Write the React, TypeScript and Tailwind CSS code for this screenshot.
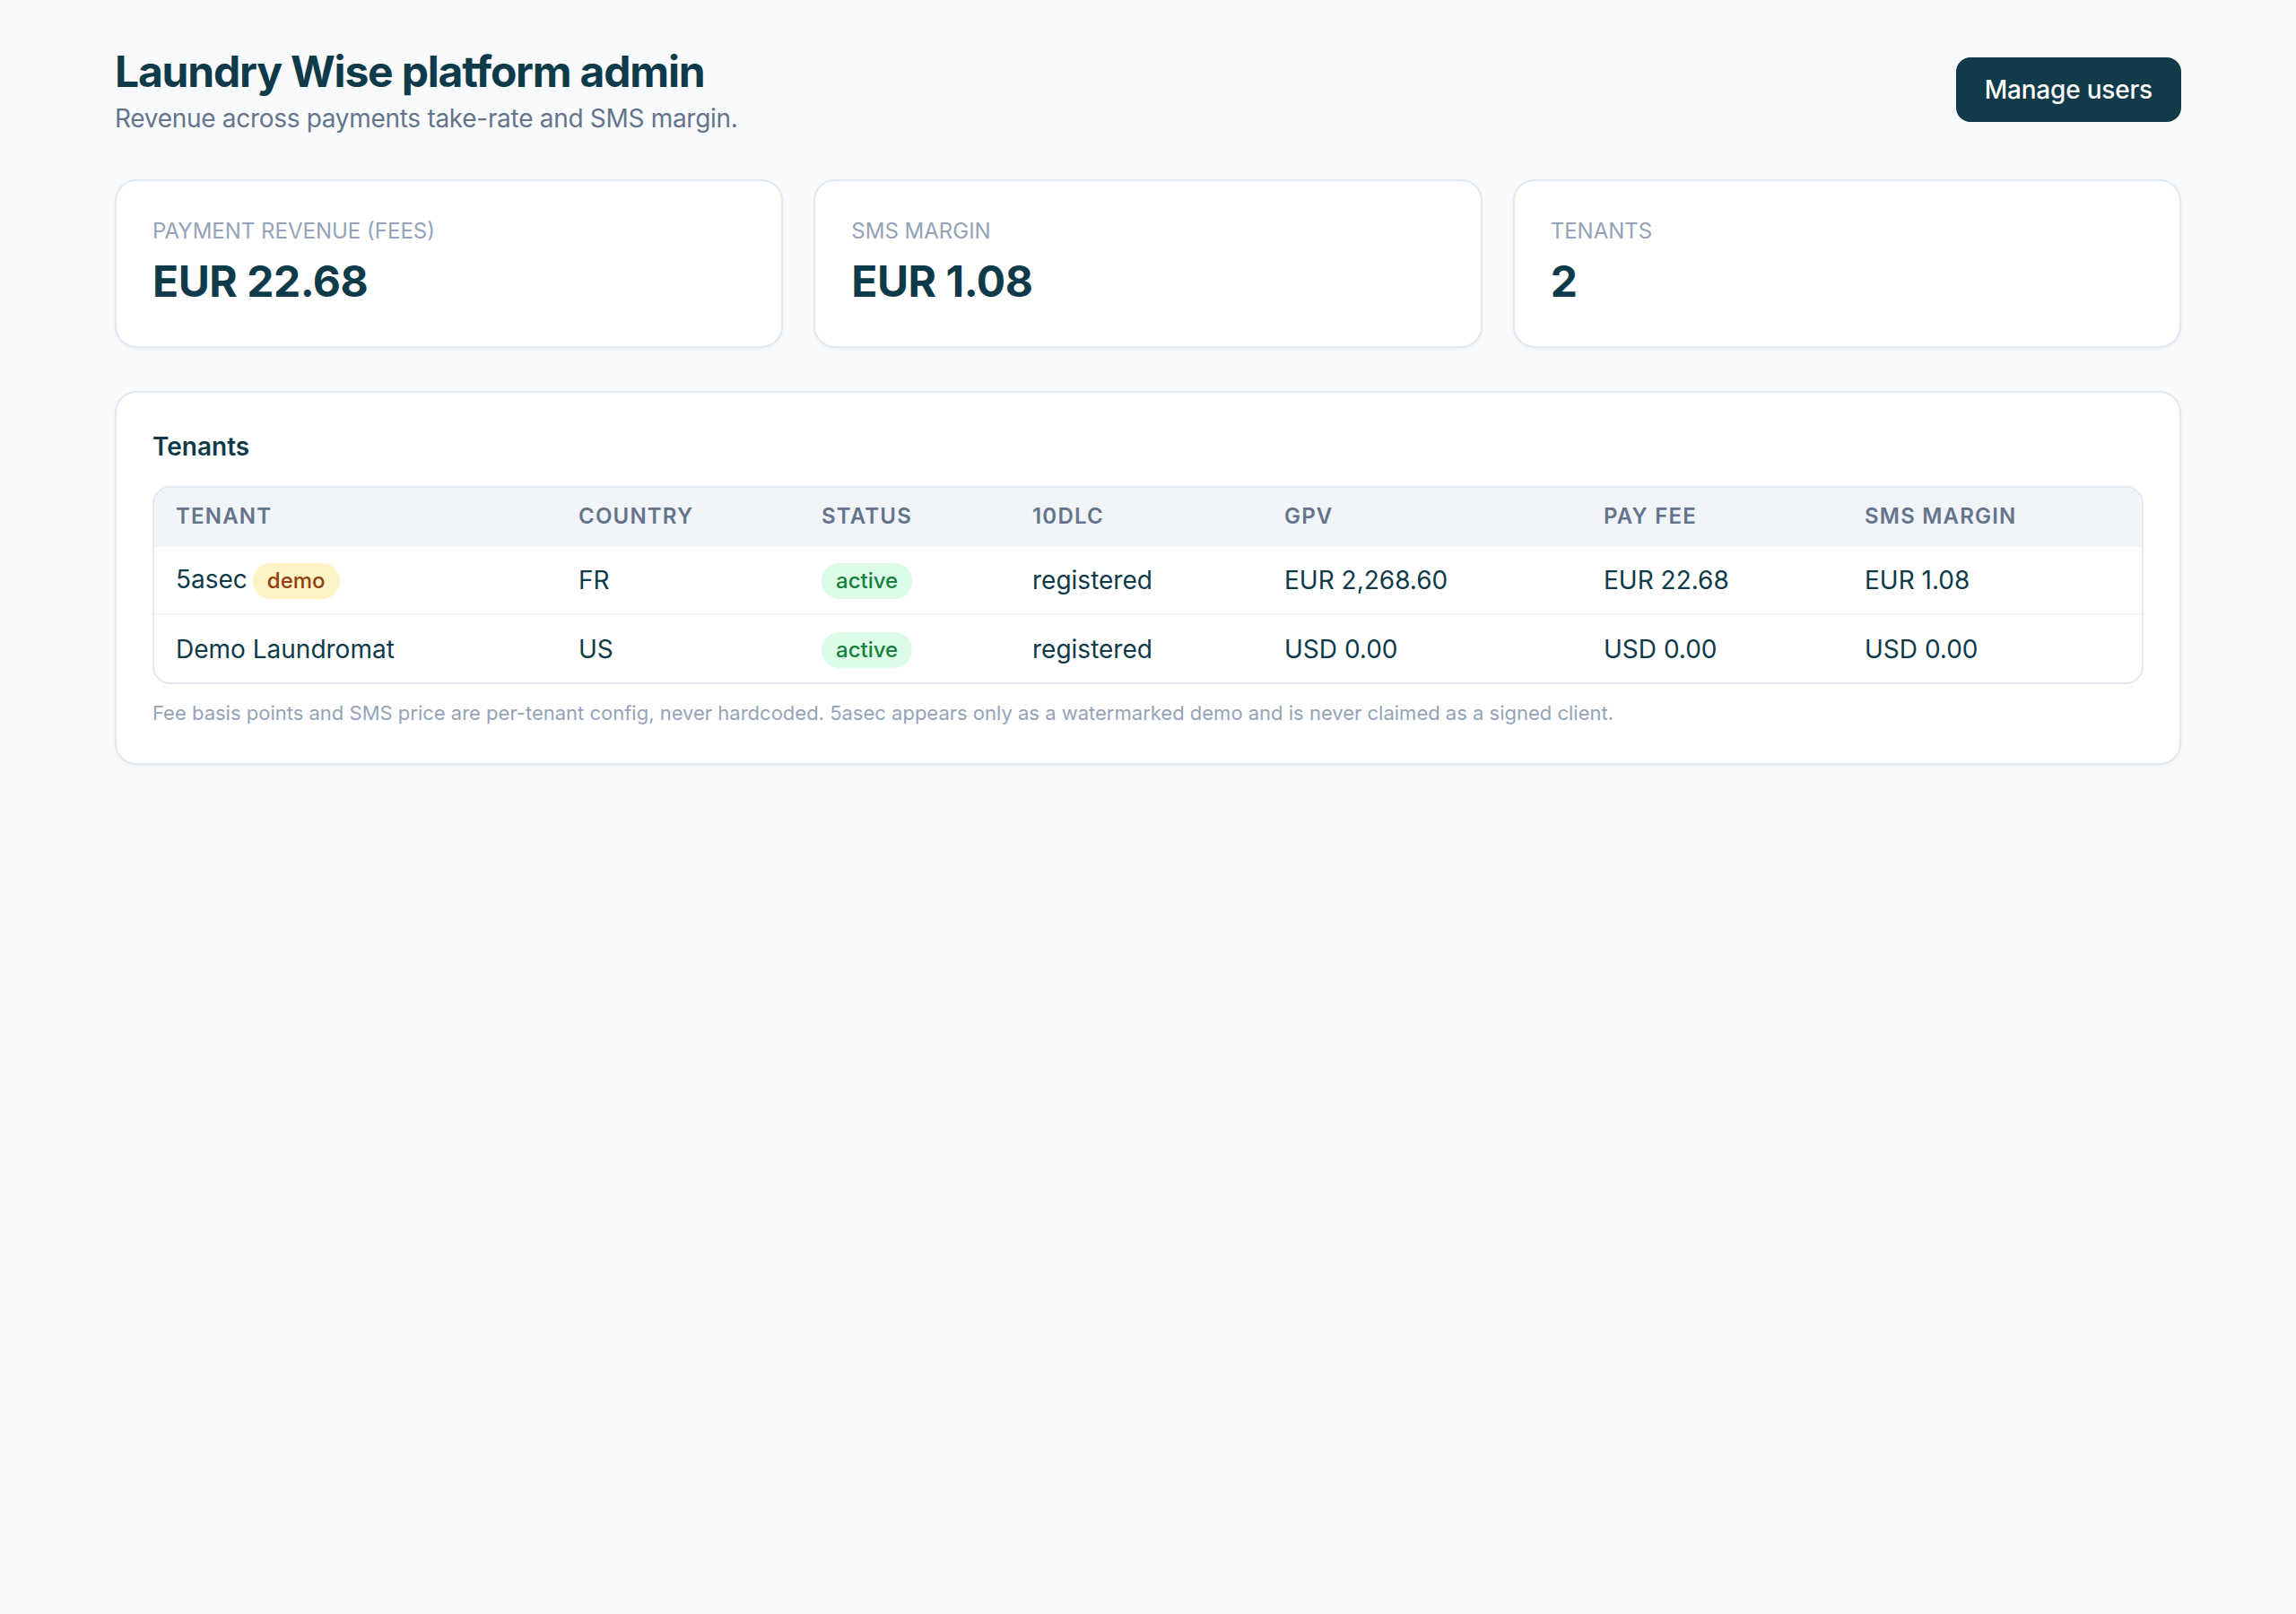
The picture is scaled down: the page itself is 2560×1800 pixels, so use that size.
import React from "react";

// Screenshot was taken at 2x, so every size below is the 1x Tailwind value doubled.

const stats = [
  { label: "Payment revenue (fees)", value: "EUR 22.68" },
  { label: "SMS margin", value: "EUR 1.08" },
  { label: "Tenants", value: "2" },
];

const columns = [
  { key: "tenant", title: "Tenant", width: "w-[449px]" },
  { key: "country", title: "Country", width: "w-[271px]" },
  { key: "status", title: "Status", width: "w-[235px]" },
  { key: "tendlc", title: "10DLC", width: "w-[281px]" },
  { key: "gpv", title: "GPV", width: "w-[356px]" },
  { key: "fee", title: "Pay fee", width: "w-[291px]" },
  { key: "sms", title: "SMS margin", width: "w-[333px]" },
];

const tenants = [
  { name: "5asec", demo: true, country: "FR", status: "active", tendlc: "registered", gpv: "EUR 2,268.60", fee: "EUR 22.68", sms: "EUR 1.08" },
  { name: "Demo Laundromat", demo: false, country: "US", status: "active", tendlc: "registered", gpv: "USD 0.00", fee: "USD 0.00", sms: "USD 0.00" },
];

function StatCard({ label, value }: { label: string; value: string }) {
  return (
    <div className="rounded-[24px] border-2 border-[#e2e8f0] bg-white p-[40px] shadow-[0_2px_4px_rgba(15,23,42,0.04)]">
      <div className="text-[24px] leading-[32px] uppercase text-[#94a3b8]">{label}</div>
      <div className="mt-[8px] text-[48px] leading-[64px] font-bold tracking-[-0.5px] text-[#0f3a4a]">{value}</div>
    </div>
  );
}

function Badge({ tone, children }: { tone: "amber" | "green"; children: React.ReactNode }) {
  const cls =
    tone === "amber"
      ? "bg-[#fef3c7] text-[#92400e]"
      : "bg-[#dcfce7] text-[#15803d]";
  return (
    <span className={`inline-block rounded-full px-[16px] py-[4px] text-[24px] leading-[32px] font-medium align-middle ${cls}`}>
      {children}
    </span>
  );
}

export default function App() {
  return (
    <div className="min-h-screen bg-[#f8fafc] font-['Inter','Noto_Sans',sans-serif] text-[#0f3a4a]">
      <div className="mx-auto max-w-[2304px] py-[48px]">
        <header className="flex items-center justify-between">
          <div>
            <h1 className="text-[48px] leading-[64px] font-bold tracking-[-1.2px] text-[#0f3a4a]">Laundry Wise platform admin</h1>
            <p className="text-[28px] leading-[40px] tracking-[-0.3px] text-[#64748b]">Revenue across payments take-rate and SMS margin.</p>
          </div>
          <button className="rounded-[16px] bg-[#113a4a] px-[32px] py-[16px] text-[28px] leading-[40px] font-medium tracking-[-0.2px] text-white hover:opacity-90">
            Manage users
          </button>
        </header>

        <div className="mt-[48px] grid grid-cols-3 gap-[34px]">
          {stats.map((s) => (
            <StatCard key={s.label} label={s.label} value={s.value} />
          ))}
        </div>

        <section className="mt-[48px] rounded-[24px] border-2 border-[#e2e8f0] bg-white p-[40px] shadow-[0_2px_4px_rgba(15,23,42,0.04)]">
          <h2 className="mb-[24px] text-[28px] leading-[40px] font-semibold">Tenants</h2>

          <div className="overflow-hidden rounded-[20px] border-2 border-[#e2e8f0]">
            <table className="w-full table-fixed border-collapse text-left">
              <thead className="bg-[#f1f5f9]">
                <tr>
                  {columns.map((c) => (
                    <th
                      key={c.key}
                      className={`${c.width} px-[24px] py-[16px] text-[24px] leading-[32px] font-semibold uppercase tracking-wider text-[#64748b]`}
                    >
                      {c.title}
                    </th>
                  ))}
                </tr>
              </thead>
              <tbody className="text-[28px] leading-[40px]">
                {tenants.map((t) => (
                  <tr key={t.name} className="border-t-2 border-[#f1f5f9]">
                    <td className="px-[24px] py-[16px]">
                      {t.name}
                      {t.demo && (
                        <span className="ml-[6px]">
                          <Badge tone="amber">demo</Badge>
                        </span>
                      )}
                    </td>
                    <td className="px-[24px] py-[16px]">{t.country}</td>
                    <td className="px-[24px] py-[16px]">
                      <Badge tone="green">{t.status}</Badge>
                    </td>
                    <td className="px-[24px] py-[16px]">{t.tendlc}</td>
                    <td className="px-[24px] py-[16px]">{t.gpv}</td>
                    <td className="px-[24px] py-[16px]">{t.fee}</td>
                    <td className="px-[24px] py-[16px]">{t.sms}</td>
                  </tr>
                ))}
              </tbody>
            </table>
          </div>

          <p className="mt-[16px] text-[22px] leading-[32px] text-[#94a3b8]">
            Fee basis points and SMS price are per-tenant config, never hardcoded. 5asec appears only as a watermarked demo and is never claimed as a signed client.
          </p>
        </section>
      </div>
    </div>
  );
}
